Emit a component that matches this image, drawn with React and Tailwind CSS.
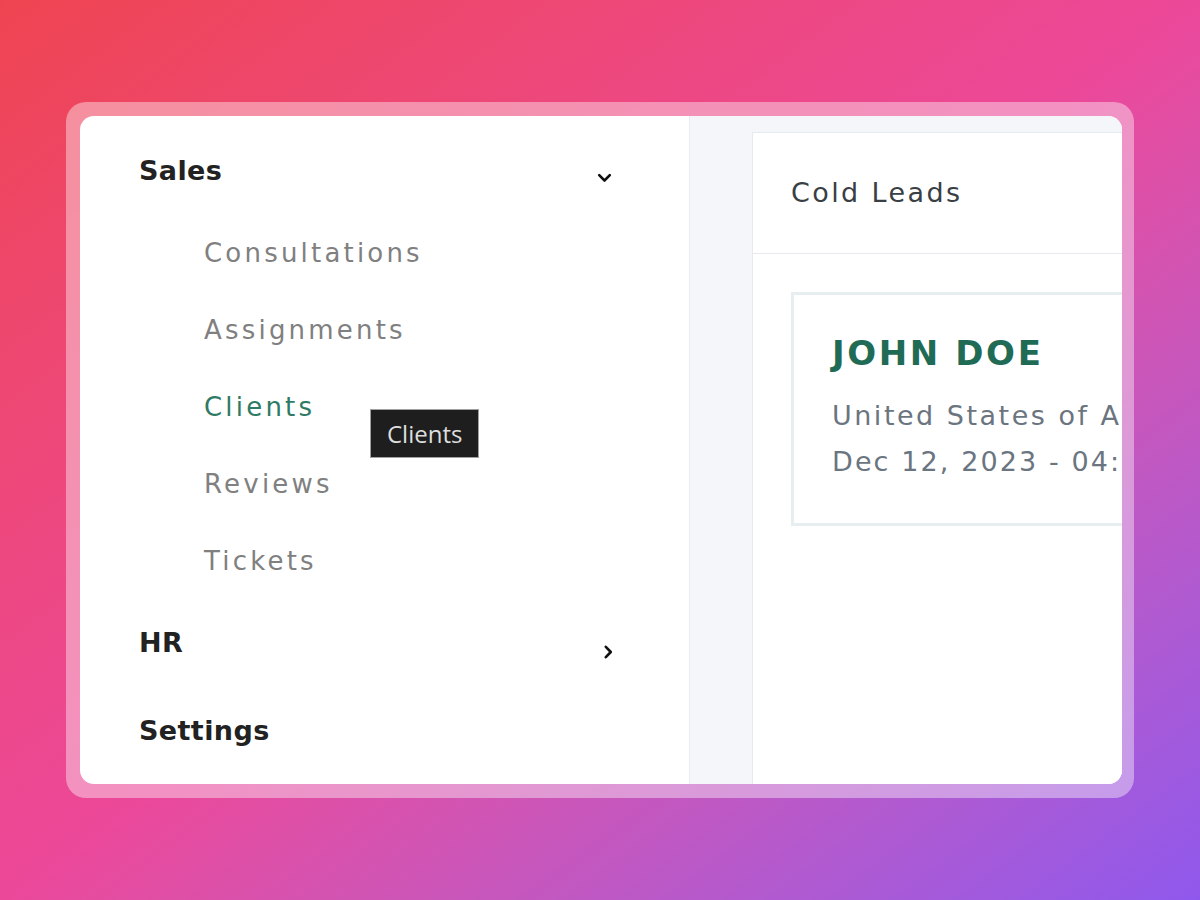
export default function App() {
  const subItems = ['Consultations', 'Assignments', 'Clients', 'Reviews', 'Tickets']

  return (
    <div className="w-full h-[900px] bg-linear-to-br from-[#ef4450] via-[#ec4899] to-[#8f58ec] flex items-center justify-center" style={{ fontFamily: '"DejaVu Sans", sans-serif' }}>
      <div className="w-[1068px] h-[696px] pl-[14px] pr-[12px] py-[14px] rounded-[20px] bg-white/40">
        <div className="w-full h-full bg-white rounded-[14px] overflow-hidden flex">
          {/* sidebar */}
          <div className="relative w-[610px] shrink-0 border-r border-[#e6ecef] pl-[59px] pr-[79px] pt-[17px] flex flex-col">
            <div className="h-[76px] flex items-center justify-between">
              <span className="text-[27px] font-bold tracking-[0.4px] text-[#222]">Sales</span>
              <svg width="15" height="10" viewBox="0 0 15 10" className="mt-[14px] mr-[-2px]">
                <path d="M2.2 2.2 L7.5 7.5 L12.8 2.2" fill="none" stroke="#111" strokeWidth="2.6" strokeLinecap="round" strokeLinejoin="round" />
              </svg>
            </div>
            <div className="mt-[6px] pl-[65px] flex flex-col">
              {subItems.map((item) => (
                <div key={item} className="h-[77px] flex items-center">
                  <span className={`text-[26px] tracking-[3.2px] ${item === 'Clients' ? 'text-[#2f7a64]' : 'text-[#808080]'}`}>{item}</span>
                </div>
              ))}
            </div>
            <div className="mt-[5px] h-[76px] flex items-center justify-between">
              <span className="text-[27px] font-bold tracking-[0.4px] text-[#222]">HR</span>
              <svg width="10" height="16" viewBox="0 0 10 16" className="mt-[18px] mr-[-3px]">
                <path d="M2.8 2.8 L7.8 8 L2.8 13.2" fill="none" stroke="#111" strokeWidth="2.6" strokeLinecap="round" strokeLinejoin="round" />
              </svg>
            </div>
            <div className="mt-[12px] h-[76px] flex items-center">
              <span className="text-[27px] font-bold tracking-[0.4px] text-[#222]">Settings</span>
            </div>

            <div className="absolute left-[290px] top-[293px] h-[49px] px-[16px] flex items-center bg-[#1e1e1e] border border-[#a0a0a0]">
              <span className="text-[24px] text-[#dedede]" style={{ fontFamily: '"Open Sans", "Noto Sans", sans-serif' }}>Clients</span>
            </div>
          </div>

          {/* main */}
          <div className="flex-1 bg-[#f4f6f9] pl-[62px] pt-[16px] overflow-hidden">
            <div className="w-[700px] h-full bg-white border-l border-t border-[#e4eaee]">
              <div className="h-[121px] border-b border-[#e4eaee] px-[38px] flex items-center">
                <span className="text-[27px] tracking-[2.4px] text-[#3a3f45]">Cold Leads</span>
              </div>
              <div className="pt-[38px] pl-[38px]">
                <div className="w-[560px] h-[234px] border-[3px] border-[#e7eef0] pl-[38px] pt-[38px]">
                  <div className="text-[34px] font-bold tracking-[2.6px] text-[#1f6b55] leading-[40px] whitespace-nowrap">JOHN DOE</div>
                  <div className="mt-[20px] text-[27px] tracking-[2.5px] text-[#6b7580] leading-[46px] whitespace-nowrap">United States of America</div>
                  <div className="text-[27px] tracking-[2.1px] text-[#6b7580] leading-[46px] whitespace-nowrap">Dec 12, 2023 - 04:55 PM</div>
                </div>
              </div>
            </div>
          </div>
        </div>
      </div>
    </div>
  )
}
